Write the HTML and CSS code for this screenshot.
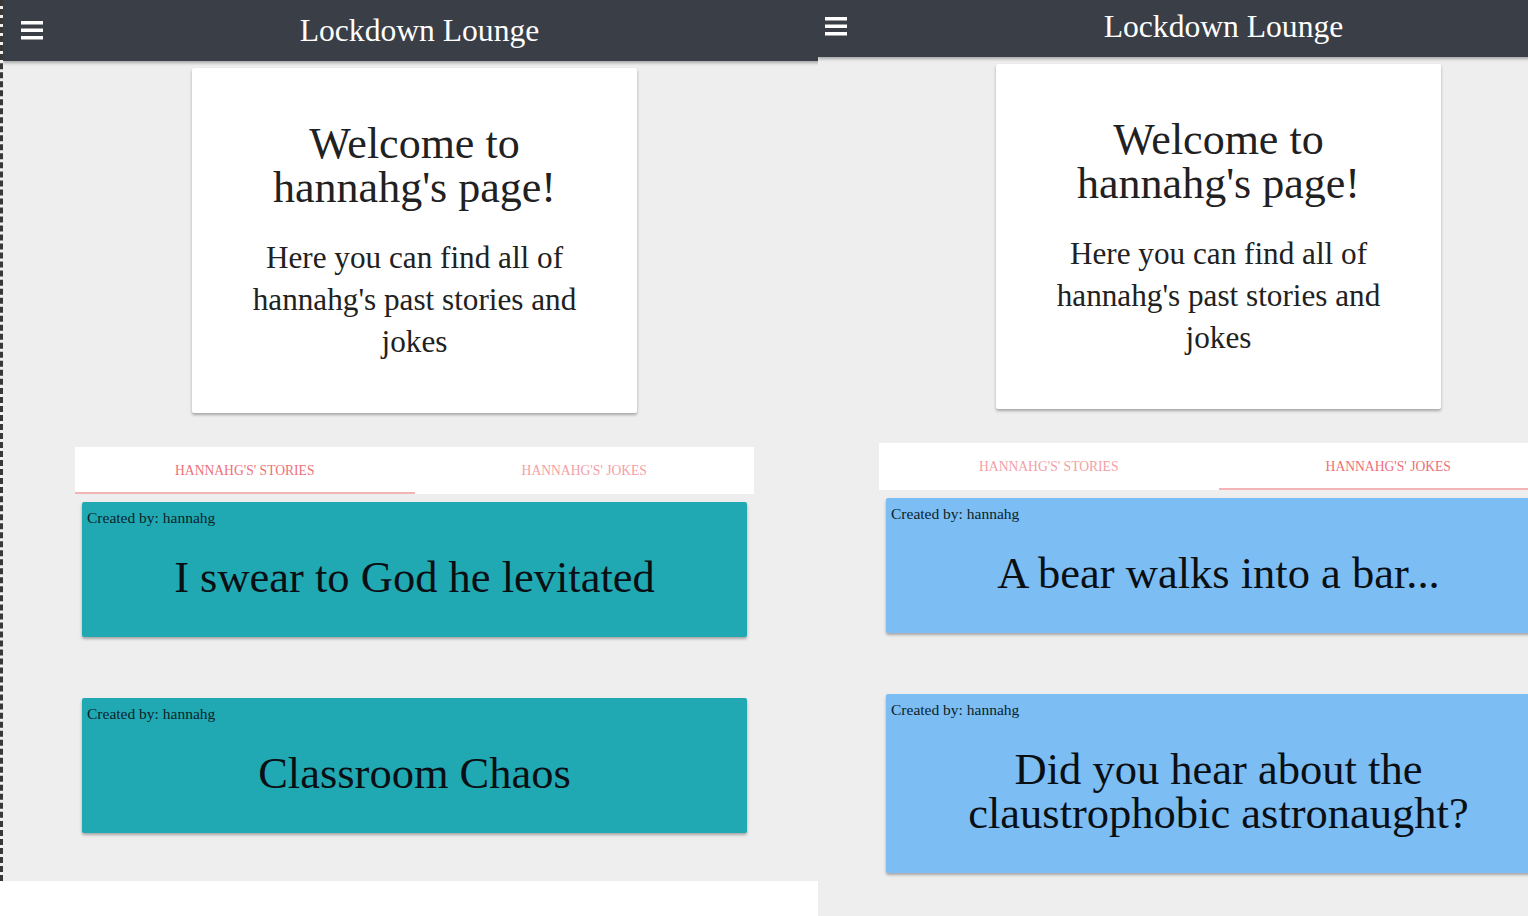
FILE: index.html
```html
<!DOCTYPE html>
<html lang="en">
<head>
<meta charset="utf-8">
<title>Lockdown Lounge</title>
<link rel="stylesheet" href="styles.css">
</head>
<body>
<div class="screens">
  <section class="panel panel--left">
    <div class="app app--left">
      <header class="navbar">
        <button class="menu" aria-label="Menu">
          <svg width="22" height="19" viewBox="0 0 22 19"><rect x="0" y="0" width="22" height="3.5" fill="#fff"/><rect x="0" y="7.5" width="22" height="3.5" fill="#fff"/><rect x="0" y="15" width="22" height="3.5" fill="#fff"/></svg>
        </button>
        <h2 class="brand">Lockdown Lounge</h2>
      </header>
      <main class="content">
        <div class="welcome">
          <h1 class="welcome__title">Welcome to hannahg's page!</h1>
          <p class="welcome__text">Here you can find all of hannahg's past stories and jokes</p>
        </div>
        <nav class="tabs">
          <div class="tab tab--active">HANNAHG'S' STORIES</div>
          <div class="tab">HANNAHG'S' JOKES</div>
        </nav>
        <div class="posts">
          <article class="post post--story">
            <p class="post__author">Created by: hannahg</p>
            <h3 class="post__title">I swear to God he levitated</h3>
          </article>
          <article class="post post--story">
            <p class="post__author">Created by: hannahg</p>
            <h3 class="post__title">Classroom Chaos</h3>
          </article>
        </div>
      </main>
    </div>
  </section>
  <section class="panel panel--right">
    <div class="app app--right">
      <header class="navbar">
        <button class="menu" aria-label="Menu">
          <svg width="22" height="19" viewBox="0 0 22 19"><rect x="0" y="0" width="22" height="3.5" fill="#fff"/><rect x="0" y="7.5" width="22" height="3.5" fill="#fff"/><rect x="0" y="15" width="22" height="3.5" fill="#fff"/></svg>
        </button>
        <h2 class="brand">Lockdown Lounge</h2>
      </header>
      <main class="content">
        <div class="welcome">
          <h1 class="welcome__title">Welcome to hannahg's page!</h1>
          <p class="welcome__text">Here you can find all of hannahg's past stories and jokes</p>
        </div>
        <nav class="tabs">
          <div class="tab">HANNAHG'S' STORIES</div>
          <div class="tab tab--active">HANNAHG'S' JOKES</div>
        </nav>
        <div class="posts">
          <article class="post post--joke">
            <p class="post__author">Created by: hannahg</p>
            <h3 class="post__title">A bear walks into a bar...</h3>
          </article>
          <article class="post post--joke">
            <p class="post__author">Created by: hannahg</p>
            <h3 class="post__title">Did you hear about the claustrophobic astronaught?</h3>
          </article>
        </div>
      </main>
    </div>
  </section>
</div>
</body>
</html>
```

FILE: styles.css
```css
* { box-sizing: border-box; }

html, body {
  margin: 0;
  padding: 0;
  background: #ffffff;
  font-family: "Liberation Serif", "Times New Roman", serif;
}

.screens {
  display: flex;
  align-items: flex-start;
  width: 1528px;
  height: 916px;
  overflow: hidden;
}

.panel {
  flex: none;
  overflow: hidden;
  background: #eeeeee;
}

.panel--left {
  width: 818px;
  height: 881px;
  border-left: 3px dashed #383838;
}

.panel--right {
  width: 710px;
  height: 916px;
}

.app--left { width: 823px; }
.app--right { width: 801px; }

.navbar {
  display: grid;
  grid-template-columns: 1fr auto 1fr;
  align-items: center;
  background: #3a3e47;
  box-shadow: 0 2px 3px rgba(0, 0, 0, 0.3);
  position: relative;
  z-index: 1;
}

.app--left .navbar { height: 61px; }
.app--right .navbar { height: 57px; padding-bottom: 4px; }

.menu {
  justify-self: start;
  display: flex;
  padding: 0;
  border: 0;
  background: none;
}

.app--left .menu { margin-left: 18px; }
.app--right .menu { margin-left: 7px; }

.brand {
  grid-column: 2;
  margin: 0 0 0 10px;
  color: #ffffff;
  font-weight: normal;
  font-size: 31.6px;
  line-height: 1;
  white-space: nowrap;
}

.content {
  display: flex;
  flex-direction: column;
  align-items: center;
}

.welcome {
  width: 445px;
  margin-top: 7px;
  padding: 54px 50px 50px;
  background: #ffffff;
  border-radius: 2px;
  box-shadow: 0 2px 3px rgba(0, 0, 0, 0.3);
  text-align: center;
  color: #212121;
}

.welcome__title {
  margin: 0 0 26.5px;
  font-weight: normal;
  font-size: 44px;
  line-height: 44px;
}

.welcome__text {
  margin: 0;
  font-size: 31.2px;
  line-height: 42px;
}

.tabs {
  display: flex;
  width: 679px;
  margin-top: 34px;
  background: #ffffff;
}

.tab {
  flex: 1;
  height: 47px;
  padding-top: 3px;
  display: flex;
  align-items: center;
  justify-content: center;
  border-bottom: 2px solid transparent;
  font-size: 13.6px;
  color: #f3a0a6;
}

.tab--active {
  color: #ee6f78;
  border-bottom-color: #f4b3b5;
}

.posts {
  display: flex;
  flex-direction: column;
  gap: 60.5px;
  width: 665px;
  margin-top: 8px;
}

.post {
  padding: 6px 5px 38.7px;
  border-radius: 2px;
  box-shadow: 0 2px 3px rgba(0, 0, 0, 0.3);
}

.post--story { background: #20a9b3; }
.post--joke { background: #7cbdf4; }

.post__author {
  margin: 0 0 27px;
  font-size: 15.5px;
  line-height: 20px;
  color: #0b1f2a;
}

.post__title {
  margin: 0;
  text-align: center;
  font-weight: normal;
  font-size: 44.5px;
  line-height: 44px;
  color: #0a0f14;
}
```
